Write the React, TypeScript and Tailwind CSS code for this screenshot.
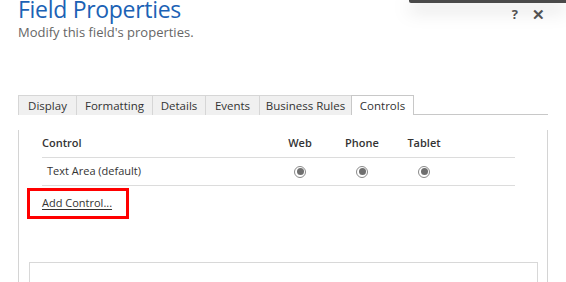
import React from "react";

const tabs = [
  { label: "Display", w: "w-[58px]" },
  { label: "Formatting", w: "w-[76px]" },
  { label: "Details", w: "w-[53px]" },
  { label: "Events", w: "w-[54px]" },
  { label: "Business Rules", w: "w-[92px]" },
];

function Radio() {
  return (
    <span className="flex h-[12px] w-[12px] items-center justify-center rounded-full border border-[#8a8a8a] bg-white">
      <span className="h-[7px] w-[7px] rounded-full bg-[#6f6f6f]" />
    </span>
  );
}

export default function App() {
  return (
    <div
      className="relative h-[282px] w-[566px] overflow-hidden bg-white text-[#333]"
      style={{ fontFamily: "'Segoe UI', 'Open Sans', 'Noto Sans', sans-serif" }}
    >
      {/* edge of the window above, with its shadow */}
      <div className="absolute left-[409px] right-0 top-0 h-[3px] rounded-bl-[2px] bg-[#4a4a4a] shadow-[0_6px_18px_rgba(0,0,0,0.35)]" />

      <div className="flex h-[39px] items-start justify-between pl-[18px] pr-[21px]">
        <div>
          <div className="mt-[-5px] text-[23px] leading-[28px] tracking-[-0.3px] text-[#1b62b5]">Field Properties</div>
          <div className="mt-[0px] text-[13px] leading-[18px] text-[#666]">Modify this field's properties.</div>
        </div>
        <div className="mt-[5px] flex items-center gap-[14px] text-[13px] font-bold text-[#555]">
          <span>?</span>
          <span className="text-[15px] leading-none">✕</span>
        </div>
      </div>

      {/* tab strip */}
      <div className="ml-[18px] mt-[56px] flex w-[530px] items-end text-[11.5px]">
        {tabs.map((t) => (
          <div
            key={t.label}
            className={`${t.w} flex h-[20px] items-center justify-center border-l border-t border-[#d6d6d6] bg-[#f0f0f0] text-[#333]`}
          >
            {t.label}
          </div>
        ))}
        <div className="flex h-[20px] w-[63px] items-center justify-center border-l border-r border-t border-[#c8c8c8] bg-white text-[#333]">
          Controls
        </div>
        <div className="h-[20px] flex-1 border-b border-[#c8c8c8]" />
      </div>

      {/* panel */}
      <div className="ml-[18px] h-[200px] w-[530px] border-l border-r border-[#d4d4d4]">
        <div className="ml-[23px] mt-[15px] w-[473px] text-[11px]">
          <div className="grid h-[28px] grid-cols-[227px_62px_62px_62px_1fr] items-center border-b border-[#dcdcdc] font-semibold">
            <div>Control</div>
            <div className="text-center">Web</div>
            <div className="text-center">Phone</div>
            <div className="text-center">Tablet</div>
            <div />
          </div>
          <div className="grid h-[28px] grid-cols-[227px_62px_62px_62px_1fr] items-center border-b border-[#dcdcdc]">
            <div className="pl-[5px]">Text Area (default)</div>
            <div className="flex justify-center"><Radio /></div>
            <div className="flex justify-center"><Radio /></div>
            <div className="flex justify-center"><Radio /></div>
            <div />
          </div>
        </div>
        <div className="ml-[8px] mt-[2px] flex h-[31px] w-[102px] items-center border-[3px] border-[#ff0000] pl-[12px] text-[11px]">
          <span className="underline underline-offset-2">Add Control...</span>
        </div>
        <div className="ml-[10px] mt-[43px] h-[40px] w-[509px] border-l border-r border-t border-[#d8d8d8]" />
      </div>
    </div>
  );
}
